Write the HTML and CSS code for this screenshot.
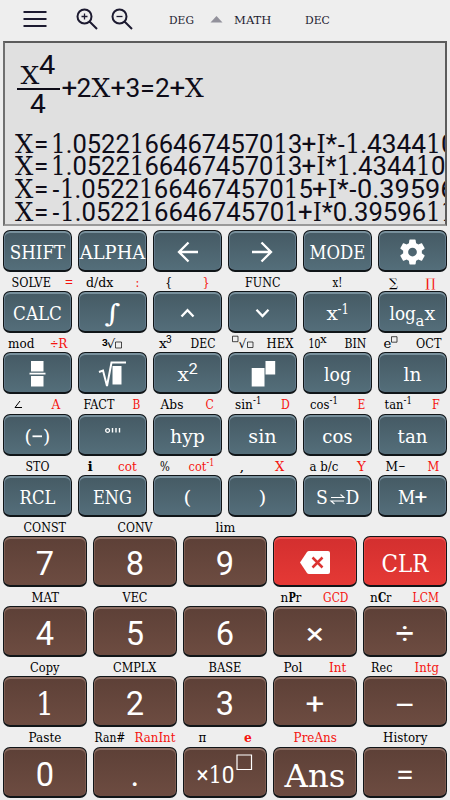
FILE: index.html
```html
<!DOCTYPE html>
<html lang="en">
<head>
<meta charset="utf-8">
<title>Calculator</title>
<link rel="stylesheet" href="styles.css">
</head>
<body>
<main class="app">
  <header class="bar" id="bar"></header>
  <section class="display" id="display"></section>
  <section class="pad" id="pad"></section>
</main>
<script src="app.js"></script>
</body>
</html>
```
FILE: styles.css
```css
* { box-sizing: border-box; }
html, body { margin: 0; }
body { width: 450px; height: 800px; overflow: hidden; background: #eee; }
svg { display: block; overflow: visible; }
text { font-family: "Roboto Slab", "DejaVu Serif Condensed", "DejaVu Serif", serif; font-stretch: condensed; fill: currentColor; white-space: pre; }
.num { font-family: Roboto, sans-serif; font-stretch: normal; }
.bold { font-weight: 700; }
.alt { fill: #f5140f; }
.app { display: flex; flex-direction: column; width: 450px; height: 800px; }
.bar { height: 41px; color: #1c1a30; }
.display { height: 185px; margin: 0 3px 0 3px; border: 2px solid #5c5c5c; border-left-color: #707070; border-bottom-color: #999; background: #e0e0e0; color: #0e0c18; overflow: hidden; }
.pad { padding-top: 4px; color: #fff; }
.row { display: flex; }
.legend { height: 19.2px; color: #000; }
.key { flex: 1; height: 42px; margin: 0 3px; padding: 0; border: 1px solid #101518; border-bottom-width: 2px; border-radius: 7px; color: #fff; background: linear-gradient(#455a64, #546e7a); box-shadow: inset 0 2px 0 #78909c, inset 1px 0 0 #62798a, inset -1px 0 0 #62798a; }
.key svg { margin: -1px; }
.big .key { height: 51px; background: linear-gradient(#5d4037, #6d4c41); box-shadow: inset 0 2px 0 #8d6e63, inset 1px 0 0 #7d5b50, inset -1px 0 0 #7d5b50; }
.big .key.red { background: linear-gradient(#d32f2f, #e53935); box-shadow: inset 0 2px 0 #ef5350, inset 1px 0 0 #e84543, inset -1px 0 0 #e84543; }
.line { fill: none; stroke: currentColor; }
.solid { fill: currentColor; }
```
FILE: app.js
```js
// Digits and signs use the plain face, letters the slab face.
function runs(s) {
  return s.replace(/[02-9+=*.×÷−]+/g, m => `<tspan class="num">${m}</tspan>`);
}
// Text that spans x1..x2 on the baseline y.
function T(s, x1, x2, y, size, cls = '') {
  return `<text class="${cls}" x="${x1 - .4}" y="${y}" font-size="${size}" textLength="${x2 - x1 + .8}" lengthAdjust="spacingAndGlyphs">${runs(s)}</text>`;
}
const svg = (w, h, body) => `<svg width="${w}" height="${h}" viewBox="0 0 ${w} ${h}">${body}</svg>`;
const L = (d, w = 2) => `<path class="line" stroke-width="${w}" d="${d}"/>`;
const S = d => `<path class="solid" fill-rule="evenodd" d="${d}"/>`;

document.getElementById('bar').innerHTML = svg(450, 41,
  L('M23.5 12h23M23.5 19h23M23.5 26h23') +
  L('M91.5 16.5a7 7 0 1 1-14 0a7 7 0 1 1 14 0M89.5 21.5l7.5 7.5') + L('M81.5 16.5h6M84.5 13.5v6', 1.3) +
  L('M126.5 16.5a7 7 0 1 1-14 0a7 7 0 1 1 14 0M124.5 21.5l7.5 7.5') + L('M116.5 16.5h6', 1.3) +
  T('DEG', 169.5, 193.5, 23.7, 11.8) + '<path fill="#92919b" d="M210.5 22.5l6-6.5 6 6.5z"/>' +
  T('MATH', 234.5, 271, 23.7, 11.8) + T('DEC', 305.5, 329.5, 23.7, 11.8));

document.getElementById('display').innerHTML = svg(441, 181, '<g transform="translate(-5 -43)">' +
  T('X', 21, 39, 84, 25) + T('4', 39.5, 55, 73.7, 25) + L('M17 89h43') + T('4', 30.5, 45.5, 112.7, 25) +
  T('+', 62, 77, 97, 26) + T('2', 77, 91, 97, 26) + T('X', 92, 110, 97, 25.5) + T('+', 111, 125.5, 97, 26) +
  T('3', 126, 140, 97, 26) + T('=', 140.5, 154.5, 97, 26) + T('2', 155.5, 169.5, 97, 26) +
  T('+', 170, 185, 97, 26) + T('X', 185.5, 203.5, 97, 25.5) +
  [['1.0522166467457013', 51.5, 302, '+I*-1.434410', 455.5],
   ['1.0522166467457013', 51.5, 302, '+I*1.434410', 445],
   ['-1.0522166467457015', 52.5, 312.5, '+I*-0.39596', 455],
   ['-1.052216646745701', 52.5, 298.5, '+I*0.3959611', 455]]
    .map(([a, x1, x2, b, x3], i) => { const y = 152.5 + i * 22.7;
      return T('X', 15.5, 33, y, 25.5) + T('=', 34.5, 48, y, 26) + T(a, x1, x2, y, 26) + T(b, x2, x3, y, 26); }).join('') + '</g>');

// Legend entry: text, left edge, right edge, class.
const k = (s, a, b, c) => T(s, a, b, 14.5, 12, c);
const r = (s, a, b) => k(s, a, b, 'alt');
const sup = (s, a, b, c) => T(s, a, b, 10, 10.5, c);
const box = (x, y, w) => L(`M${x} ${y}h${w}v${w}h-${w}z`, .7);
const legends = [
  k('SOLVE', 12, 50.5) + r('=', 65, 73) + k('d/dx', 86.5, 113) + r(':', 136, 139) + k('{', 165.5, 172) + r('}', 203, 209.5) + k('FUNC', 245.5, 280) + k('x!', 333, 342) + k('∑', 389.5, 397.5) + r('∏', 426, 435.5),
  k('mod', 8.5, 34) + r('÷R', 51, 67) + T('3', 102.5, 107.5, 12.5, 9, 'bold') + k('√', 107, 115) + box(115.5, 9, 6) + k('x', 159.5, 166.5) + sup('3', 166.5, 171.5) + k('DEC', 191, 215) + box(232.5, 3.2, 5.5) + k('√', 239, 246) + box(247.5, 9, 5.5) + k('HEX', 267, 293) + k('10', 309, 320) + sup('x', 320.5, 326.5) + k('BIN', 345, 366) + k('e', 384, 391) + box(391.5, 3.7, 5.5) + k('OCT', 416.5, 441),
  L('M20 7l-5 6.5h7', 1) + r('A', 52, 60) + k('FACT', 84, 114) + r('B', 133, 140) + k('Abs', 161, 183) + r('C', 206, 213.5) + k('sin', 235.5, 252.5) + sup('-1', 253.5, 261) + r('D', 281.5, 289.5) + k('cos', 310.5, 329) + sup('-1', 330, 337.5) + r('E', 358, 365) + k('tan', 385, 403) + sup('-1', 404, 411.5) + r('F', 432.5, 439.5),
  k('STO', 26, 49) + k('i', 88, 92.5, 'bold') + r('cot', 118.5, 136.5) + k('%', 160.5, 169.5) + r('cot', 189, 206) + sup('-1', 207, 214, 'alt') + k(',', 240, 244) + r('X', 275.5, 284) + k('a b/c', 310, 338) + r('Y', 357.5, 365.5) + k('M−', 386, 405.5) + r('M', 428, 439),
  k('CONST', 24, 65.5) + k('CONV', 118, 152) + k('lim', 216, 235),
  k('MAT', 32, 58.5) + k('VEC', 123, 147) + k('n', 281, 288) + k('P', 289, 295.5, 'bold') + k('r', 296, 301) + r('GCD', 323.5, 348) + k('n', 370.5, 377.5) + k('C', 378.5, 386, 'bold') + k('r', 386.5, 391) + r('LCM', 413, 438.5),
  k('Copy', 30.5, 59) + k('CMPLX', 113.5, 156) + k('BASE', 209, 241) + k('Pol', 284, 302) + r('Int', 329.5, 346) + k('Rec', 371.5, 392) + r('Intg', 415, 438.5),
  k('Paste', 29, 61) + k('Ran#', 95, 125) + r('RanInt', 135, 175) + k('π', 199, 206) + k('e', 244.5, 251.5, 'alt bold') + r('PreAns', 294, 336.5) + k('History', 383.5, 427)
];

// Centred key captions.
const c = (s, w) => T(s, 34.5 - w / 2, 34.5 + w / 2, 29.2, 18.5);
const d = (s, w = 17.5, y = 39, size = 33) => T(s, 42 - w / 2, 42 + w / 2, y, size);
const gear = '<g transform="translate(34.5 22) scale(1.25) translate(-12 -12)">' + S('M19.43 12.98c.04-.32.07-.64.07-.98s-.03-.66-.07-.98l2.11-1.65c.19-.15.24-.42.12-.64l-2-3.46c-.12-.22-.39-.3-.61-.22l-2.49 1c-.52-.4-1.08-.73-1.69-.98l-.38-2.65A.488.488 0 0 0 14 2h-4c-.25 0-.46.18-.49.42l-.38 2.65c-.61.25-1.17.59-1.69.98l-2.49-1c-.23-.09-.49 0-.61.22l-2 3.46c-.13.22-.07.49.12.64l2.11 1.65c-.04.32-.07.65-.07.98s.03.66.07.98l-2.11 1.65c-.19.15-.24.42-.12.64l2 3.46c.12.22.39.3.61.22l2.49-1c.52.4 1.08.73 1.69.98l.38 2.65c.03.24.24.42.49.42h4c.25 0 .46-.18.49-.42l.38-2.65c.61-.25 1.17-.59 1.69-.98l2.49 1c.23.09.49 0 .61-.22l2-3.46c.12-.22.07-.49-.12-.64zM12 15.5a3.5 3.5 0 1 1 0-7 3.5 3.5 0 0 1 0 7z') + '</g>';
const keys = [
  [c('SHIFT', 54.5), c('ALPHA', 64.5), L('M45 22H27M35.5 12.5L26 22l9.5 9.5', 2.3), L('M24 22h18M33.5 12.5L43 22l-9.5 9.5', 2.3), c('MODE', 55), gear],
  [c('CALC', 48), T('∫', 27, 42, 30.5, 25), L('M28.5 25.5l6-6.3 6 6.3', 2.3), L('M28.5 18.7l6 6.3 6-6.3', 2.3), T('x', 24, 34.5, 29.2, 18.5) + T('-1', 35, 45.5, 23, 15), T('log', 12, 37.5, 29.2, 18.5) + T('a', 38, 46, 34.5, 15) + T('x', 47, 57, 29.2, 18.5)],
  [S('M28 9h12.5v10.5H28zM26.5 20.7h16v1.7h-16zM28 24h12.5v10.5H28z'), L('M21 20l4-1.5 4 15.5L33.5 10.5H48', 2) + S('M34.5 14h9v18.5h-9z'), T('x', 25, 35.5, 29.2, 18.5) + T('2', 36, 44.5, 21.5, 15.5), S('M23.7 16h12.8v18.5H23.7zM37.5 9h9.7v13.5h-9.7z'), c('log', 26), c('ln', 17)],
  [T('(', 22, 28.5, 28.5, 18.5) + L('M29.5 22.3h9.5', 1.8) + T(')', 40.5, 47, 28.5, 18.5), L('M31.5 16.5a1.9 1.9 0 1 1-3.8 0a1.9 1.9 0 1 1 3.8 0', 1.3) + L('M34.5 14v4.5M38 14v4.5M41.5 14v4.5', 1.4), c('hyp', 34), c('sin', 27.5), c('cos', 29.5), c('tan', 29)],
  [c('RCL', 35), c('ENG', 38), c('(', 7), c(')', 7), T('S', 13.5, 24.5, 29.2, 18.5) + L('M28 22.5h13l-3.5-3M41 26H28l3.5 3', 1.1) + T('D', 43, 56, 29.2, 18.5), T('M', 20.5, 37, 29.2, 18.5) + T('+', 37, 49, 29.2, 20)],
  [d('7'), d('8'), d('9'), S('M27 26.5l7-10.5q.8-1 2-1h19q2 0 2 2v19q0 2-2 2H36q-1.2 0-2-1z') + '<path fill="none" stroke="#dc3331" stroke-width="2.5" d="M39.5 21.5l10 10M49.5 21.5l-10 10"/>', T('CLR', 19, 65, 36.2, 24)],
  [d('4'), d('5'), d('6'), d('×', 17, 38, 30), d('÷', 18, 38, 29)],
  [d('1', 17, 39, 32), d('2'), d('3'), d('+', 18, 38, 29), d('−', 21, 38.5, 29)],
  [d('0'), d('.', 8), T('×10', 14, 51, 36.3, 24) + L('M54 8h14.5v14.5H54z', 1.2), T('Ans', 12, 72, 39.5, 32), d('=', 17, 38, 29)]
];
document.getElementById('pad').innerHTML = keys.map((row, i) => {
  const big = i > 4, w = big ? 84 : 69, h = big ? 51 : 42;
  return `<div class="row${big ? ' big' : ''}">` + row.map((body, j) => `<button class="key${i === 5 && j > 2 ? ' red' : ''}">${svg(w, h, body)}</button>`).join('') + '</div>' +
    (legends[i] ? `<div class="legend">${svg(450, 19, legends[i])}</div>` : '');
}).join('');
```
